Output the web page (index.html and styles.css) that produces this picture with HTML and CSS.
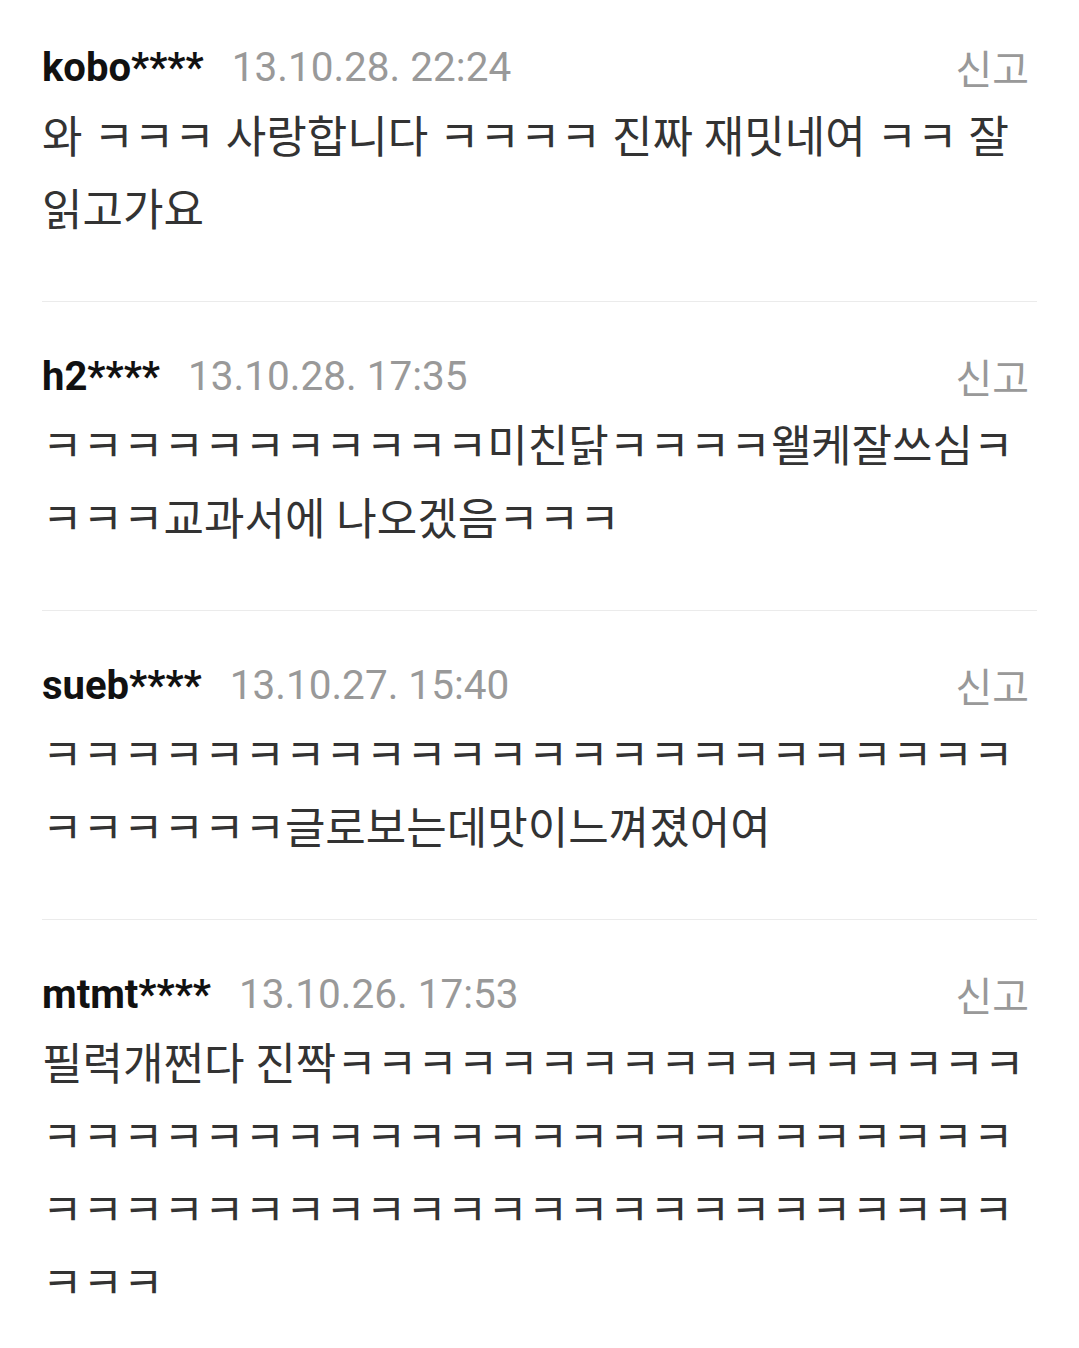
FILE: index.html
```html
<!DOCTYPE html>
<html lang="ko">
<head>
<meta charset="utf-8">
<link rel="stylesheet" href="styles.css">
</head>
<body>
<ul class="comments">
  <li class="comment">
    <div class="meta">
      <span class="user">kobo****</span>
      <span class="date">13.10.28. 22:24</span>
      <span class="report">신고</span>
    </div>
    <p class="text">와 ㅋㅋㅋ 사랑합니다 ㅋㅋㅋㅋ 진짜 재밋네여 ㅋㅋ 잘 읽고가요</p>
  </li>
  <li class="comment">
    <div class="meta">
      <span class="user">h2****</span>
      <span class="date">13.10.28. 17:35</span>
      <span class="report">신고</span>
    </div>
    <p class="text">ㅋㅋㅋㅋㅋㅋㅋㅋㅋㅋㅋ미친닭ㅋㅋㅋㅋ왤케잘쓰심ㅋㅋㅋㅋ교과서에 나오겠음ㅋㅋㅋ</p>
  </li>
  <li class="comment">
    <div class="meta">
      <span class="user">sueb****</span>
      <span class="date">13.10.27. 15:40</span>
      <span class="report">신고</span>
    </div>
    <p class="text">ㅋㅋㅋㅋㅋㅋㅋㅋㅋㅋㅋㅋㅋㅋㅋㅋㅋㅋㅋㅋㅋㅋㅋㅋㅋㅋㅋㅋㅋㅋ글로보는데맛이느껴졌어여</p>
  </li>
  <li class="comment">
    <div class="meta">
      <span class="user">mtmt****</span>
      <span class="date">13.10.26. 17:53</span>
      <span class="report">신고</span>
    </div>
    <p class="text">필력개쩐다 진짝ㅋㅋㅋㅋㅋㅋㅋㅋㅋㅋㅋㅋㅋㅋㅋㅋㅋㅋㅋㅋㅋㅋㅋㅋㅋㅋㅋㅋㅋㅋㅋㅋㅋㅋㅋㅋㅋㅋㅋㅋㅋㅋㅋㅋㅋㅋㅋㅋㅋㅋㅋㅋㅋㅋㅋㅋㅋㅋㅋㅋㅋㅋㅋㅋㅋㅋㅋㅋ</p>
  </li>
</ul>
</body>
</html>
```

FILE: styles.css
```css
html, body {
  margin: 0;
  padding: 0;
  background: #ffffff;
}

body {
  font-family: Roboto, "Noto Sans CJK KR", sans-serif;
  color: #333333;
}

.comments {
  list-style: none;
  margin: 0;
  padding: 0 42px;
}

.comment {
  padding: 39px 0 53px;
  border-bottom: 1px solid #ebebeb;
}

.comment:first-child {
  padding-top: 32px;
}

.comment:last-child {
  border-bottom: none;
}

.meta {
  display: flex;
  align-items: center;
  height: 70px;
  font-size: 40px;
}

.user {
  font-weight: 700;
  color: #111111;
}

.date {
  color: #999999;
  margin-left: 28px;
  font-size: 40.5px;
}

.report {
  margin-left: auto;
  margin-right: 8px;
  color: #999999;
  font-family: "Noto Sans CJK KR", sans-serif;
}

.text {
  margin: 0;
  font-size: 44px;
  line-height: 73px;
  color: #333333;
}
```
